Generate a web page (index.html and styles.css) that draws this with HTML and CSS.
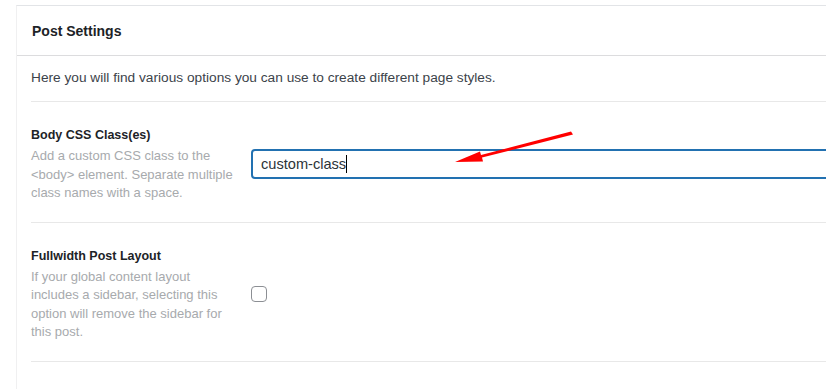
FILE: index.html
```html
<!DOCTYPE html>
<html lang="en">
<head>
    <meta charset="UTF-8">
    <meta name="viewport" content="width=device-width, initial-scale=1.0">
    <title>Post Settings</title>
    <link rel="stylesheet" href="styles.css">
</head>
<body>

    <div class="postbox">
        <div class="postbox-header">
            <h2>Post Settings</h2>
        </div>

        <div class="inside">
            <p class="intro">Here you will find various options you can use to create different page styles.</p>

            <!-- Body class field -->
            <div class="field-row">
                <div class="field-label">
                    <h3>Body CSS Class(es)</h3>
                    <p class="description">Add a custom CSS class to the &lt;body&gt; element. Separate multiple class names with a space.</p>
                </div>
                <div class="field-input">
                    <div class="text-input">custom-class<span class="caret"></span></div>
                </div>
            </div>

            <!-- Fullwidth layout field -->
            <div class="field-row">
                <div class="field-label">
                    <h3>Fullwidth Post Layout</h3>
                    <p class="description">If your global content layout includes a sidebar, selecting this option will remove the sidebar for this post.</p>
                </div>
                <div class="field-input">
                    <span class="checkbox"></span>
                </div>
            </div>

            <div class="field-row">
                <div class="field-label">
                    <h3>Disable Post Title</h3>
                </div>
            </div>
        </div>
    </div>

    <!-- Annotation arrow pointing at the input -->
    <svg class="arrow" width="826" height="389" viewBox="0 0 826 389">
        <polygon points="571,131.5 573,134.5 482,157.5 483,161.5 455,162 480,151.5 481,155" fill="#ff0000" />
    </svg>

</body>
</html>
```

FILE: styles.css
```css
body {
    margin: 0;
    padding: 0;
    background: #fff;
    font-family: "Liberation Sans", Arial, sans-serif;
    color: #3c434a;
    overflow: hidden;
    position: relative;
}

.postbox {
    width: 1200px;
    margin: 5px 0 0 16px;
    border-top: 1px solid #e2e4e7;
    border-left: 1px solid #f0f0f1;
}

.postbox-header {
    height: 49px;
    display: flex;
    align-items: center;
    padding: 0 15px;
    border-bottom: 1px solid #dcdcde;
}

.postbox-header h2 {
    margin: 0;
    font-size: 14px;
    font-weight: 700;
    color: #1d2327;
}

.inside {
    padding: 0 14px;
}

.intro {
    margin: 0;
    padding: 13px 0 14px;
    font-size: 13.7px;
    line-height: 18px;
    border-bottom: 1px solid #e8e8e8;
}

.field-row {
    display: flex;
    align-items: center;
    padding: 24px 0 19px;
    border-bottom: 1px solid #e8e8e8;
}

.field-label {
    width: 202px;
    flex-shrink: 0;
}

.field-label h3 {
    margin: 0 0 3px;
    font-size: 12.5px;
    line-height: 18px;
    font-weight: 700;
    color: #1d2327;
}

.description {
    margin: 0;
    font-size: 13px;
    line-height: 18.5px;
    color: #a7aaad;
}

.field-input {
    flex: 1;
    margin-left: 18px;
}

.text-input {
    height: 26px;
    padding: 0 8px;
    display: flex;
    align-items: center;
    font-size: 14.6px;
    color: #2c3338;
    border: 2px solid #2271b1;
    border-radius: 4px;
}

.caret {
    display: inline-block;
    width: 1px;
    height: 18px;
    background: #000;
}

.checkbox {
    display: block;
    width: 14px;
    height: 14px;
    border: 1px solid #8c8f94;
    border-radius: 4px;
}

.arrow {
    position: absolute;
    left: 0;
    top: 0;
    pointer-events: none;
}
```
